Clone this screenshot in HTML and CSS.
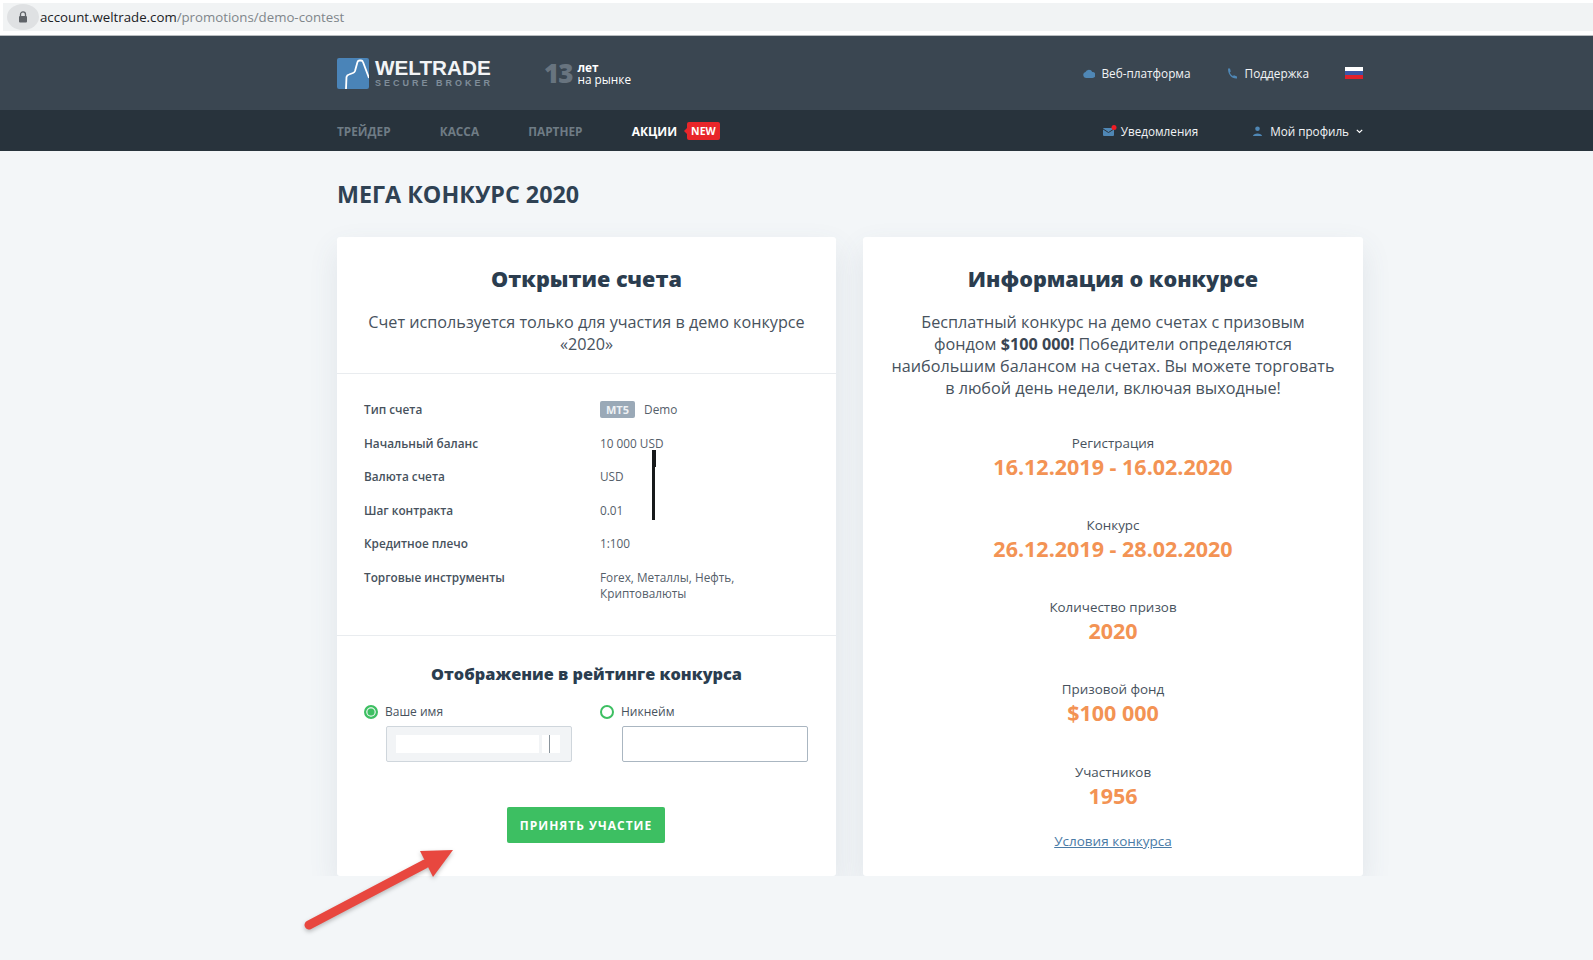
FILE: index.html
```html
<!DOCTYPE html>
<html lang="ru">
<head>
    <meta charset="UTF-8">
    <title>Мега конкурс 2020</title>
    <link rel="stylesheet" href="styles.css">
</head>
<body>
<div class="address-bar">
    <div class="address-field">
        <span class="lock-pill">
            <svg width="10" height="12" viewBox="0 0 10 12"><path d="M2.5 5V3.4a2.5 2.5 0 0 1 5 0V5" fill="none" stroke="#5f6368" stroke-width="1.3"/><rect x="1" y="5" width="8" height="6.5" rx="1" fill="#5f6368"/></svg>
        </span>
        <span class="url">account.weltrade.com<span class="url-path">/promotions/demo-contest</span></span>
    </div>
</div>

<header class="top-header">
    <div class="wrap top-row">
        <div class="brand">
            <svg class="logo-mark" width="32" height="31" viewBox="0 0 32 31"><rect width="32" height="31" rx="2" fill="#4a84b8"/><path d="M9 31 L9.500 19 Q10 17 12 16.500 L16 15 Q17.500 14.500 18 13 L20.500 4 Q21 2.500 22.500 2.500 L24 2.500 Q25.500 2.500 26 4 L32 20" fill="none" stroke="#fff" stroke-width="1.800"/></svg>
            <div class="logo-text">
                <div class="logo-name">WELTRADE</div>
                <div class="logo-sub">SECURE BROKER</div>
            </div>
            <div class="years">
                <span class="years-num">13</span>
                <span class="years-text"><b>лет</b><br>на рынке</span>
            </div>
        </div>
        <div class="top-links">
            <a class="top-link">
                <svg width="12" height="9" viewBox="0 0 12 9"><path d="M3 9a3 3 0 0 1-.5-5.900A3.600 3.600 0 0 1 9.300 3 3 3 0 0 1 9.500 9z" fill="#4f87b5"/></svg>
                Веб-платформа
            </a>
            <a class="top-link link-support">
                <svg width="10" height="11" viewBox="0 0 10 11"><path d="M1 0.500 L3 0.500 L3.800 3.500 L2.800 4.500 C3.300 6 4.300 7.200 5.800 8 L7 7.200 L10 8.500 L10 10.500 C5 11 1 7 1 0.500z" fill="#4f87b5"/></svg>
                Поддержка
            </a>
            <span class="flag"></span>
        </div>
    </div>
</header>

<nav class="main-nav">
    <div class="wrap nav-row">
        <div class="nav-links">
            <a class="nav-link">ТРЕЙДЕР</a>
            <a class="nav-link">КАССА</a>
            <a class="nav-link">ПАРТНЕР</a>
            <a class="nav-link nav-active">АКЦИИ <span class="badge-new">NEW</span></a>
        </div>
        <div class="nav-right">
            <a class="nav-item">
                <svg width="14" height="12" viewBox="0 0 14 12"><rect y="3" width="11" height="8" rx="1" fill="#4f87b5"/><path d="M0 4 L5.500 7.500 L11 4" fill="none" stroke="#28333c" stroke-width="1"/><circle cx="11" cy="2.500" r="2.500" fill="#f01c24"/></svg>
                Уведомления
            </a>
            <a class="nav-item profile">
                <svg width="9" height="10" viewBox="0 0 9 10"><circle cx="4.500" cy="2.700" r="2.300" fill="#4f87b5"/><path d="M0 10 C0 6.500 9 6.500 9 10z" fill="#4f87b5"/></svg>
                Мой профиль
                <svg class="chevron" width="7" height="5" viewBox="0 0 7 5"><path d="M0.800 0.800 L3.500 3.500 L6.200 0.800" fill="none" stroke="#fff" stroke-width="1.200"/></svg>
            </a>
        </div>
    </div>
</nav>

<main class="wrap content">
    <h1 class="page-title">МЕГА КОНКУРС 2020</h1>
    <div class="cards">
        <section class="card">
            <div class="card-head">
                <h2 class="card-title">Открытие счета</h2>
                <p class="card-text">Счет используется только для участия в демо конкурсе «2020»</p>
            </div>
            <div class="details">
                <div class="detail-name">Тип счета</div>
                <div class="detail-value"><span class="tag">MT5</span> Demo</div>
                <div class="detail-name">Начальный баланс</div>
                <div class="detail-value">10 000 USD</div>
                <div class="detail-name">Валюта счета</div>
                <div class="detail-value">USD</div>
                <div class="detail-name">Шаг контракта</div>
                <div class="detail-value">0.01</div>
                <div class="detail-name">Кредитное плечо</div>
                <div class="detail-value">1:100</div>
                <div class="detail-name">Торговые инструменты</div>
                <div class="detail-value">Forex, Металлы, Нефть, Криптовалюты</div>
                <!-- marks drawn over the screenshot -->
                <span class="mark mark-thick"></span>
                <span class="mark mark-thin"></span>
            </div>
            <form class="rating">
                <h3 class="rating-title">Отображение в рейтинге конкурса</h3>
                <div class="rating-grid">
                    <div>
                        <div class="radio-row"><span class="radio radio-on"></span>Ваше имя</div>
                        <div class="field field-off">
                            <span class="blank blank-wide"></span>
                            <span class="blank blank-small"></span>
                        </div>
                    </div>
                    <div>
                        <div class="radio-row"><span class="radio"></span>Никнейм</div>
                        <div class="field"></div>
                    </div>
                </div>
                <button class="btn-join" type="button">ПРИНЯТЬ УЧАСТИЕ</button>
            </form>
        </section>

        <section class="card card-info">
            <h2 class="card-title">Информация о конкурсе</h2>
            <p class="card-text">Бесплатный конкурс на демо счетах с призовым<br>фондом <b>$100 000!</b> Победители определяются<br>наибольшим балансом на счетах. Вы можете торговать<br>в любой день недели, включая выходные!</p>
            <div class="facts">
                <div><div class="fact-name">Регистрация</div><div class="fact-value">16.12.2019 - 16.02.2020</div></div>
                <div><div class="fact-name">Конкурс</div><div class="fact-value">26.12.2019 - 28.02.2020</div></div>
                <div><div class="fact-name">Количество призов</div><div class="fact-value">2020</div></div>
                <div><div class="fact-name">Призовой фонд</div><div class="fact-value">$100 000</div></div>
                <div><div class="fact-name">Участников</div><div class="fact-value">1956</div></div>
            </div>
            <a class="terms">Условия конкурса</a>
        </section>
    </div>
</main>

<svg class="arrow" width="170" height="90" viewBox="0 0 170 90">
    <path d="M9 83 L125 22" fill="none" stroke="#e8473f" stroke-width="9" stroke-linecap="round"/>
    <path d="M120 9 L153 8 L133 35z" fill="#e8473f"/>
</svg>
</body>
</html>
```

FILE: styles.css
```css
*{
    box-sizing:border-box;
}
body{
    margin:0;
    background:#f3f6f8;
    color:#47525d;
    font-family:"Open Sans","Noto Sans",sans-serif;
    overflow:hidden;
}
h1,h2,h3,p{
    margin:0;
}
.wrap{
    width:1026px;
    margin-left:337px;
}

/* browser address bar */
.address-bar{
    height:36px;
    padding:3px 0 4px 3px;
    background:#fff;
    border-bottom:1px solid #b9bdc0;
}
.address-field{
    display:flex;
    align-items:center;
    height:28px;
    background:#f1f3f4;
}
.lock-pill{
    display:flex;
    align-items:center;
    justify-content:center;
    width:32px;
    height:26px;
    margin-left:4px;
    border-radius:50%;
    background:#dfe1e3;
}
.url{
    margin-left:1px;
    font-size:13.250px;
    color:#202124;
}
.url-path{
    color:#80868b;
}

/* header */
.top-header{
    height:74px;
    background:#3a4651;
}
.top-row{
    display:flex;
    align-items:center;
    justify-content:space-between;
    height:74px;
}
.brand{
    display:flex;
    align-items:center;
}
.logo-text{
    width:115px;
    margin-left:6px;
    font-family:"Liberation Sans",Arial,sans-serif;
    font-weight:bold;
}
.logo-name{
    font-size:20.700px;
    line-height:20px;
    color:#f2f4f6;
}
.logo-sub{
    font-size:9px;
    line-height:10px;
    letter-spacing:3px;
    color:#7f8d99;
    white-space:nowrap;
}
.years{
    display:flex;
    align-items:center;
    margin-left:54px;
}
.years-num{
    font-size:26px;
    line-height:28px;
    font-weight:800;
    letter-spacing:-1px;
    color:#68747f;
}
.years-text{
    margin-left:5px;
    font-size:11.800px;
    line-height:12px;
    color:#fff;
}
.top-links{
    display:flex;
    align-items:center;
}
.top-link{
    display:flex;
    align-items:center;
    gap:6px;
    font-size:11.800px;
    color:#f2f4f6;
}
.link-support{
    margin-left:36px;
    gap:8px;
}
.flag{
    width:18px;
    height:12px;
    margin-left:36px;
    background:linear-gradient(#fff 0 33%,#3a56a6 33% 66%,#e0202a 66%);
}

/* nav */
.main-nav{
    height:41px;
    padding-top:1px;
    background:#28333c;
}
.nav-row{
    display:flex;
    align-items:center;
    justify-content:space-between;
    height:40px;
}
.nav-links{
    display:flex;
    align-items:center;
    gap:49.200px;
}
.nav-link{
    font-size:11.800px;
    font-weight:700;
    color:#6f7c85;
}
.nav-active{
    display:flex;
    align-items:center;
    gap:10px;
    font-size:12px;
    color:#fff;
}
.badge-new{
    position:relative;
    padding:0 4px;
    height:18px;
    line-height:18px;
    border-radius:2px;
    background:#e8262a;
    font-size:10.500px;
    font-weight:700;
    color:#fff;
}
.badge-new::before{
    content:"";
    position:absolute;
    left:-3px;
    top:6px;
    border-style:solid;
    border-width:3px 3px 3px 0;
    border-color:transparent #e8262a transparent transparent;
}
.nav-right{
    display:flex;
    align-items:center;
}
.nav-item{
    display:flex;
    align-items:center;
    gap:4px;
    font-size:11.700px;
    color:#f2f4f6;
}
.profile{
    margin-left:55px;
    gap:8px;
}
.chevron{
    margin-left:-1px;
}

/* page */
.page-title{
    padding-top:26px;
    font-size:23.300px;
    line-height:34px;
    font-weight:700;
    color:#2f4254;
}
.cards{
    display:grid;
    grid-template-columns:499px 500px;
    gap:27px;
    margin-top:26px;
}
.card{
    height:639px;
    background:#fff;
    border-radius:3px;
    box-shadow:0 12px 30px rgba(70,95,120,.11);
}
.card-head{
    padding:27px 27px 18px;
    text-align:center;
    border-bottom:1px solid #e9ecef;
}
.card-title{
    font-size:21.600px;
    line-height:30px;
    font-weight:800;
    color:#2b3d4f;
}
.card-text{
    margin-top:17px;
    font-size:16.200px;
    line-height:22px;
}
.card-text b{
    font-weight:700;
    color:#3a4551;
}

.details{
    position:relative;
    display:grid;
    grid-template-columns:236px 1fr;
    row-gap:17.600px;
    padding:27px 27px 34px;
    font-size:11.800px;
    line-height:16px;
    border-bottom:1px solid #e9ecef;
}
.detail-name{
    font-weight:600;
    color:#47525d;
}
.detail-value{
    width:170px;
    color:#55606a;
}
.tag{
    display:inline-block;
    height:17px;
    margin:0 6px -1px 0;
    padding:0 6px;
    line-height:17px;
    vertical-align:top;
    border-radius:2px;
    background:#9aa9b7;
    font-size:11px;
    font-weight:700;
    color:#eef1f4;
}
.mark{
    position:absolute;
    background:#17191b;
}
.mark-thick{
    left:315px;
    top:76px;
    width:4px;
    height:17px;
}
.mark-thin{
    left:315px;
    top:93px;
    width:3px;
    height:53px;
}

.rating{
    padding:26px 27px 0;
}
.rating-title{
    font-size:16.300px;
    line-height:24px;
    font-weight:800;
    text-align:center;
    color:#2b3d4f;
}
.rating-grid{
    display:grid;
    grid-template-columns:236px 1fr;
    margin-top:18px;
}
.radio-row{
    display:flex;
    align-items:center;
    gap:7px;
    font-size:12px;
    line-height:16px;
}
.radio{
    width:14px;
    height:14px;
    border:2px solid #3dbf62;
    border-radius:50%;
}
.radio-on{
    background:#3dbf62;
    box-shadow:inset 0 0 0 1.500px #d5f0dd;
}
.field{
    width:186px;
    height:36px;
    margin:6px 0 0 22px;
    border:1px solid #aab6c1;
    border-radius:2px;
    background:#fff;
}
.field-off{
    display:flex;
    align-items:center;
    gap:3px;
    padding-left:9px;
    border-color:#cfd6dc;
    background:#f2f4f6;
}
.blank{
    height:18px;
    background:#fff;
}
.blank-wide{
    width:143px;
}
.blank-small{
    width:18px;
    background:linear-gradient(90deg,#fff 7px,#8a949c 7px 8px,#fff 8px);
}
.btn-join{
    display:block;
    width:158px;
    height:36px;
    margin:45px 0 0 143px;
    padding-top:2px;
    border:0;
    border-radius:2px;
    background:#3dbf62;
    font-family:inherit;
    font-size:12px;
    font-weight:700;
    letter-spacing:1px;
    color:#fff;
}

.card-info{
    padding:27px 27px 0;
    text-align:center;
}
.facts{
    display:flex;
    flex-direction:column;
    gap:34.300px;
    margin-top:32.500px;
}
.fact-name{
    font-size:13.400px;
    line-height:22px;
}
.fact-value{
    font-size:21.500px;
    line-height:26px;
    font-weight:700;
    color:#f39354;
}
.terms{
    display:block;
    margin-top:21.500px;
    font-size:13.500px;
    line-height:22px;
    color:#4a7ba6;
    text-decoration:underline;
}

.arrow{
    position:absolute;
    left:300px;
    top:842px;
    filter:drop-shadow(0 2px 2px rgba(0,0,0,.25));
}
```
